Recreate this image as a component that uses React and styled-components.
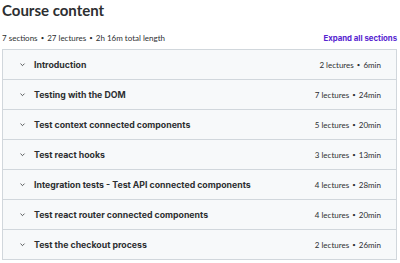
import React from "react";
import styled, { createGlobalStyle } from "styled-components";

const Global = createGlobalStyle`
  html, body { margin: 0; padding: 0; background: #fff; }
  body { font-family: Lato, "Liberation Sans", sans-serif; color: #2d2f31; }
`;

const Page = styled.div`
  padding: 0 3px 0 2px;
  width: 400px;
  box-sizing: border-box;
`;

const Title = styled.h2`
  margin: 0;
  padding-top: 1px;
  font-size: 15px;
  line-height: 18px;
  font-weight: 700;
  color: #2d2f31;
`;

const SubBar = styled.div`
  display: flex;
  justify-content: space-between;
  align-items: center;
  margin-top: 12px;
  height: 14px;
  margin-bottom: 4px;
`;

const Meta = styled.span`
  font-size: 8px;
  color: #2d2f31;
`;

const Dot = styled.span`
  font-size: 6px;
  margin: 0 1px;
  vertical-align: 1px;
`;

const Expand = styled.button`
  border: none;
  background: none;
  padding: 0;
  font-family: Inter, sans-serif;
  font-size: 7.8px;
  font-weight: 700;
  color: #5624d0;
  cursor: pointer;
`;

const Box = styled.div`
  border: 1px solid #d1d7dc;
`;

const Row = styled.div`
  display: flex;
  align-items: center;
  height: 29px;
  padding: 0 15px 0 16px;
  background: #f7f9fa;
  border-top: ${(p) => (p.$first ? "none" : "1px solid #d1d7dc")};
`;

const Chevron = styled.svg`
  width: 7px;
  height: 7px;
  margin-right: 8px;
  flex: none;
`;

const RowTitle = styled.span`
  flex: 1;
  font-family: Inter, sans-serif;
  font-size: 8.75px;
  font-weight: 700;
  color: #2d2f31;
`;

const RowMeta = styled.span`
  font-size: 8px;
  color: #2d2f31;
`;

const sections = [
  ["Introduction", 2, "6min"],
  ["Testing with the DOM", 7, "24min"],
  ["Test context connected components", 5, "20min"],
  ["Test react hooks", 3, "13min"],
  ["Integration tests - Test API connected components", 4, "28min"],
  ["Test react router connected components", 4, "20min"],
  ["Test the checkout process", 2, "26min"],
];

export default function App() {
  return (
    <Page>
      <Global />
      <Title>Course content</Title>
      <SubBar>
        <Meta>
          7 sections <Dot>•</Dot> 27 lectures <Dot>•</Dot> 2h 16m total length
        </Meta>
        <Expand>Expand all sections</Expand>
      </SubBar>
      <Box>
        {sections.map(([t, n, d], i) => (
          <Row key={t} $first={i === 0}>
            <Chevron viewBox="0 0 8 8">
              <path d="M1.7 3 L4 5.3 L6.3 3" fill="none" stroke="#2d2f31" strokeWidth="0.9" />
            </Chevron>
            <RowTitle>{t}</RowTitle>
            <RowMeta>
              {n} lectures <Dot>•</Dot> {d}
            </RowMeta>
          </Row>
        ))}
      </Box>
    </Page>
  );
}
